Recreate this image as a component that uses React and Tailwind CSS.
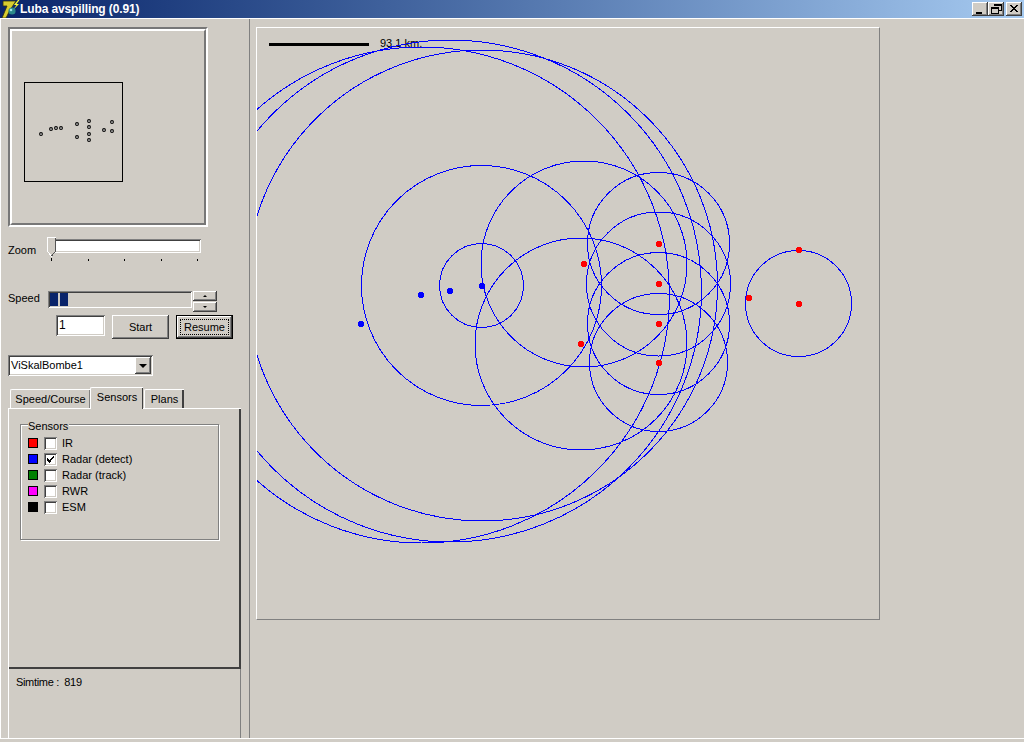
import React from 'react';

const BG = 'bg-[#d0ccc5]';
const RAISED = 'shadow-[inset_-1px_-1px_0_#404040,inset_1px_1px_0_#ffffff,inset_-2px_-2px_0_#808080]';
const SUNKEN = 'shadow-[inset_1px_1px_0_#808080,inset_-1px_-1px_0_#ffffff,inset_2px_2px_0_#404040,inset_-2px_-2px_0_#d0ccc5]';

const blueCircles = [
    [481.5, 285.5, 42],
    [481.5, 285.5, 120],
    [482, 285.5, 235.5],
    [450.5, 291, 251],
    [421.5, 295, 248],
    [584, 264, 103],
    [581, 344, 106],
    [658.5, 243.5, 71],
    [658.5, 284, 72],
    [658.5, 323.5, 71],
    [658.5, 362.5, 69],
    [798.5, 303.5, 53],
];

const blueDots = [[361, 324], [421, 295], [450, 291], [482, 286]];
const redDots = [
    [659, 244], [584, 264], [659, 284], [581, 344], [659, 324],
    [659, 363], [799, 250], [749, 298], [799, 304],
];

const miniDots = [
    [41, 134], [51, 129], [56, 128], [61, 128], [77, 124], [77, 137], [89, 121],
    [89, 127], [89, 134], [89, 140], [104, 130], [112, 122], [112, 131],
];

const sensors = [
    { label: 'IR', color: 'bg-[#ff0000]' },
    { label: 'Radar (detect)', color: 'bg-[#0000ff]', checked: true },
    { label: 'Radar (track)', color: 'bg-[#008000]' },
    { label: 'RWR', color: 'bg-[#ff00ff]' },
    { label: 'ESM', color: 'bg-black' },
];

const Dot = ({ x, y, color }) => (
    <g fill={color}>
        <rect x={x - 2} y={y - 3} width="4" height="6" />
        <rect x={x - 3} y={y - 2} width="6" height="4" />
    </g>
);

const AppIcon = () => (
    <svg width="20" height="18" viewBox="0 0 20 18" className="shrink-0">
        <path d="M3 1H16L10 10L6 18H2L7 6H3Z" fill="#d8cc30" stroke="#30300c" strokeWidth="0.8" />
        <path d="M18 0L14 5H16.5L13 10L19 4H16.5L19.5 0Z" fill="#ffff30" />
        <circle cx="12" cy="11" r="3.6" fill="#2c8a8a" />
        <circle cx="11" cy="10" r="1.3" fill="#a8e4e4" />
    </svg>
);

const WinButton = ({ children, className = '' }) => (
    <div className={`w-[16px] h-[14px] ${BG} ${RAISED} flex items-center justify-center ${className}`}>
        <svg width="16" height="14" viewBox="0 0 16 14" shapeRendering="crispEdges">{children}</svg>
    </div>
);

const TitleBar = () => (
    <div className="h-[18px] flex items-center bg-gradient-to-r from-[#0a246a] to-[#a6caf0]">
        <AppIcon />
        <span className="text-white font-bold text-[12px] leading-[18px] tracking-[-0.01em]">Luba avspilling (0.91)</span>
        <div className="ml-auto flex mr-[2px]">
            <WinButton>
                <rect x="4" y="10" width="6" height="2" fill="#000" />
            </WinButton>
            <WinButton>
                <path d="M6 2H13V8H11M6 2V4M6 3H13M3 5H10V11H3ZM3 6H10" fill="none" stroke="#000" strokeWidth="1" />
            </WinButton>
            <WinButton className="ml-[2px]">
                <path d="M4 3L11 10M5 3L12 10M11 3L4 10M12 3L5 10" fill="none" stroke="#000" strokeWidth="1" />
            </WinButton>
        </div>
    </div>
);

const MiniMap = () => (
    <div className="ml-[7px] mt-[8px] w-[200px] h-[200px] border-2 border-t-[#777] border-l-[#777] border-r-white border-b-white">
        <div className="w-full h-full border-2 border-t-white border-l-white border-r-[#777] border-b-[#777]">
            <svg width="192" height="192" viewBox="12 31 192 192">
                <rect x="24.5" y="82.5" width="98" height="99" fill="none" stroke="#000" shapeRendering="crispEdges" />
                {miniDots.map(([x, y]) => (
                    <circle key={`${x}-${y}`} cx={x} cy={y} r="1.4" fill="#eeeeee" stroke="#000" strokeWidth="1.1" />
                ))}
            </svg>
        </div>
    </div>
);

const ZoomSlider = () => (
    <div className="ml-[7px] mt-[10px] h-[24px] flex text-[11px]">
        <span className="w-[39px] mt-[6px] leading-[14px]">Zoom</span>
        <div className="relative">
            <div className={`ml-[7px] mt-[2px] w-[147px] h-[14px] bg-white ${SUNKEN}`} />
            <svg width="11" height="20" viewBox="0 0 11 20" className="absolute left-0 top-0" shapeRendering="crispEdges">
                <path d="M0.5 0.5H8.5V14.5L4.5 19L0.5 14.5Z" fill="#d0ccc5" stroke="#fff" />
                <path d="M8.5 0.5V14.5L4.5 19" fill="none" stroke="#555" />
            </svg>
            <svg width="160" height="4" viewBox="0 0 160 4" className="absolute left-0 top-[21px]" shapeRendering="crispEdges">
                {[4, 41, 77, 114, 150].map((x, i) => (
                    <rect key={x} x={x} y={i === 0 ? 0 : 1} width="1" height={i === 0 ? 3 : 2} fill="#000" />
                ))}
            </svg>
        </div>
    </div>
);

const SpeedRow = () => (
    <div className="ml-[7px] mt-[30px] h-[21px] flex text-[11px]">
        <span className="w-[40px] leading-[14px]">Speed</span>
        <div className={`w-[144px] h-[17px] pl-[2px] pt-[2px] flex gap-[2px] ${SUNKEN}`}>
            <div className="w-[8px] h-[13px] bg-[#0a246a]" />
            <div className="w-[8px] h-[13px] bg-[#0a246a]" />
        </div>
        <div className="ml-[1px] flex flex-col gap-[1px]">
            <div className={`w-[24px] h-[10px] ${BG} ${RAISED} flex items-center justify-center`}>
                <div className="w-0 h-0 border-x-[2px] border-x-transparent border-b-[2px] border-b-black" />
            </div>
            <div className={`w-[24px] h-[10px] ${BG} ${RAISED} flex items-center justify-center`}>
                <div className="w-0 h-0 border-x-[2px] border-x-transparent border-t-[2px] border-t-black" />
            </div>
        </div>
    </div>
);

const ButtonsRow = () => (
    <div className="ml-[55px] mt-[3px] flex text-[11px]">
        <div className={`w-[49px] h-[21px] bg-white ${SUNKEN} pl-[3px] leading-[21px] text-[12px]`}>1</div>
        <button className={`ml-[7px] w-[57px] h-[24px] ${BG} ${RAISED}`}>Start</button>
        <button className={`ml-[7px] w-[57px] h-[24px] ${BG} border border-black shadow-[inset_-1px_-1px_0_#404040,inset_1px_1px_0_#ffffff,inset_-2px_-2px_0_#808080] p-[3px]`}>
            <span className="flex items-center justify-center h-full border border-dotted border-black">Resume</span>
        </button>
    </div>
);

const ComboBox = () => (
    <div className={`ml-[7px] mt-[16px] w-[145px] h-[21px] bg-white ${SUNKEN} flex items-center justify-between pl-[3px] pr-[2px] text-[11px]`}>
        <span>ViSkalBombe1</span>
        <div className={`w-[16px] h-[17px] ${BG} ${RAISED} flex items-center justify-center`}>
            <div className="w-0 h-0 border-x-[4px] border-x-transparent border-t-[4px] border-t-black" />
        </div>
    </div>
);

const Tabs = () => (
    <div className="ml-[9px] mt-[11px] flex items-end h-[21px] text-[11px]">
        <div className="w-[80px] h-[19px] border-t border-l border-white rounded-tl-[2px] shadow-[inset_-1px_0_0_#808080] text-center leading-[19px]">Speed/Course</div>
        <div className="relative z-10 w-[53px] h-[22px] -mb-[1px] border-t border-l border-white rounded-tl-[2px] bg-[#d0ccc5] shadow-[inset_-1px_0_0_#404040] text-center leading-[18px]">Sensors</div>
        <div className="ml-[1px] w-[40px] h-[19px] border-t border-l border-white rounded-tl-[2px] shadow-[inset_-2px_0_0_#404040] text-center leading-[19px]">Plans</div>
    </div>
);

const SensorsGroup = () => (
    <div className="relative ml-[11px] mt-[15px] w-[199px] h-[116px] border border-[#808080] shadow-[1px_1px_0_#ffffff,inset_1px_1px_0_#ffffff] text-[11px]">
        <span className={`absolute left-[7px] -top-[5px] ${BG} leading-[12px] pr-[1px]`}>Sensors</span>
        <div className="pl-[7px] pt-[12px] flex flex-col gap-[3px]">
            {sensors.map(s => (
                <div key={s.label} className="flex items-start h-[13px]">
                    <div className={`w-[10px] h-[10px] mt-[1px] border border-black ${s.color}`} />
                    <div className={`ml-[6px] w-[13px] h-[13px] bg-white ${SUNKEN} flex items-center justify-center`}>
                        {s.checked && (
                            <svg width="9" height="9" viewBox="0 0 9 9" shapeRendering="crispEdges">
                                <path d="M1 3V6H2V7H3V8H4V7H5V5H6V4H7V3H8V1H7V2H6V3H5V4H4V5H3V4H2V3Z" fill="#000" />
                            </svg>
                        )}
                    </div>
                    <span className="ml-[5px] leading-[13px]">{s.label}</span>
                </div>
            ))}
        </div>
    </div>
);

const SidePanel = () => (
    <div className="w-[250px] shrink-0 h-full border-l border-r border-l-white border-r-[#808080] flex flex-col">
        <MiniMap />
        <ZoomSlider />
        <SpeedRow />
        <ButtonsRow />
        <ComboBox />
        <Tabs />
        <div className="ml-[7px] w-[233px] flex-1 flex flex-col border-l border-white shadow-[inset_-1px_0_0_#808080]">
            <div className="h-[261px] border-t border-t-white border-b-2 border-b-[#404040] shadow-[inset_-2px_0_0_#404040] flow-root">
                <SensorsGroup />
            </div>
            <div className="pl-[7px] pt-[6px] text-[11px] leading-[14px] whitespace-pre tracking-[-0.03em]">Simtime :  819</div>
        </div>
    </div>
);

const Canvas = () => (
    <div className="ml-[6px] mt-[8px] w-[624px] h-[593px] border border-t-white border-l-white border-r-[#808080] border-b-[#808080] relative overflow-hidden">
        <span className="absolute left-[123px] top-[8px] text-[11px] leading-[14px]">93.1 km.</span>
        <svg width="622" height="591" viewBox="257 28 622 591" shapeRendering="crispEdges" className="relative">
            <rect x="269" y="43" width="100" height="3" fill="#000" />
            {blueCircles.map(([cx, cy, r]) => (
                <circle key={`${cx}-${cy}-${r}`} cx={cx} cy={cy} r={r} fill="none" stroke="#0000ff" strokeWidth="1" />
            ))}
            {blueDots.map(([x, y]) => <Dot key={`${x}-${y}`} x={x} y={y} color="#0000ff" />)}
            {redDots.map(([x, y]) => <Dot key={`${x}-${y}`} x={x} y={y} color="#ff0000" />)}
        </svg>
    </div>
);

const App = () => (
    <div className={`w-[1024px] h-[742px] overflow-hidden ${BG} text-black font-['Liberation_Sans',sans-serif]`}>
        <TitleBar />
        <div className="h-[721px] flex border-t border-b border-white">
            <SidePanel />
            <Canvas />
        </div>
    </div>
);

export default App;
